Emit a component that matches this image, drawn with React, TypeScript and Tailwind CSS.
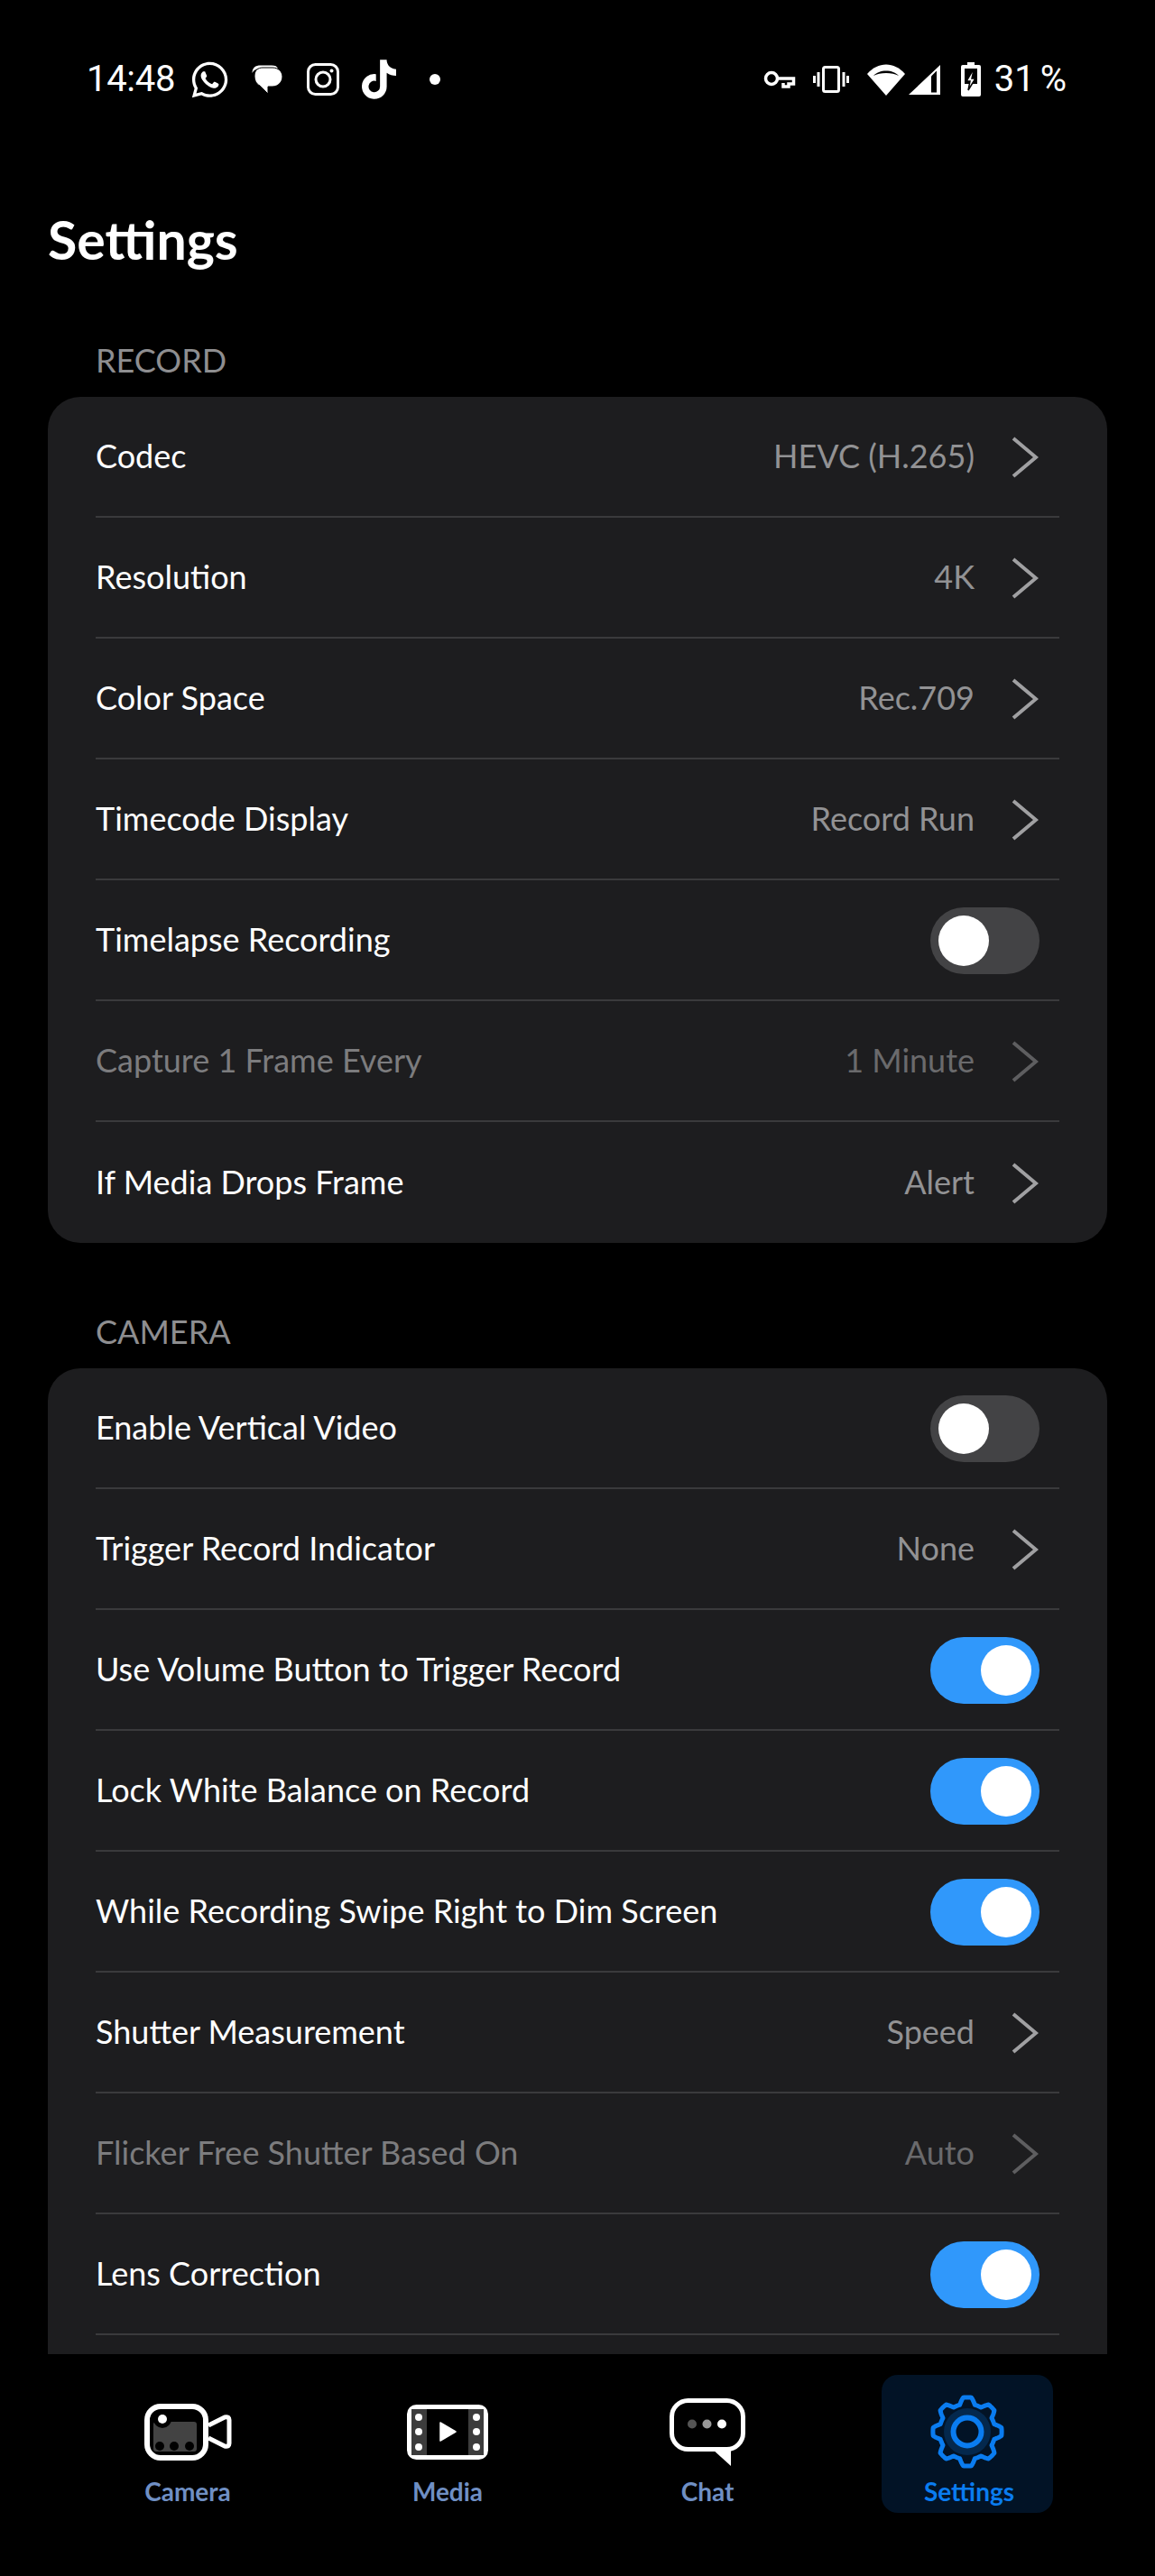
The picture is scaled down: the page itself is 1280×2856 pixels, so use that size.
import type { ReactNode } from "react";
import { FaTiktok, FaWhatsapp } from "react-icons/fa";

type Row =
  | { label: string; value: string; disabled?: boolean }
  | { label: string; on: boolean };

const recordRows: Row[] = [
  { label: "Codec", value: "HEVC (H.265)" },
  { label: "Resolution", value: "4K" },
  { label: "Color Space", value: "Rec.709" },
  { label: "Timecode Display", value: "Record Run" },
  { label: "Timelapse Recording", on: false },
  { label: "Capture 1 Frame Every", value: "1 Minute", disabled: true },
  { label: "If Media Drops Frame", value: "Alert" },
];

const cameraRows: Row[] = [
  { label: "Enable Vertical Video", on: false },
  { label: "Trigger Record Indicator", value: "None" },
  { label: "Use Volume Button to Trigger Record", on: true },
  { label: "Lock White Balance on Record", on: true },
  { label: "While Recording Swipe Right to Dim Screen", on: true },
  { label: "Shutter Measurement", value: "Speed" },
  { label: "Flicker Free Shutter Based On", value: "Auto", disabled: true },
  { label: "Lens Correction", on: true },
];

// toothed outline for the settings gear, 8 teeth with flattened tops
function gearPath() {
  const pts: string[] = [];
  for (let i = 0; i < 320; i++) {
    const t = (i / 320) * Math.PI * 2;
    const wave = Math.max(-1, Math.min(1, Math.cos(t * 8) * 1.7));
    const r = 34.5 + 3.6 * wave;
    const x = 41 + r * Math.sin(t);
    const y = 41 - r * Math.cos(t);
    pts.push(`${x.toFixed(2)} ${y.toFixed(2)}`);
  }
  return `M${pts.join("L")}Z`;
}

function Toggle({ on }: { on: boolean }) {
  return (
    <div
      className={`-mr-px mt-[2px] flex h-[74px] w-[121px] items-center rounded-full px-[9px] ${
        on ? "justify-end bg-[#3098fb]" : "justify-start bg-[#434345]"
      }`}
    >
      <div className="h-[56px] w-[56px] rounded-full bg-white" />
    </div>
  );
}

function Chevron({ disabled }: { disabled?: boolean }) {
  return (
    <svg width="30" height="46" viewBox="0 0 30 46" fill="none" className="ml-[41px] mt-[2px]">
      <path
        d="M2 2 L27 23 L2 44"
        stroke={disabled ? "#5e5e60" : "#a0a0a2"}
        strokeWidth="4"
      />
    </svg>
  );
}

function SettingsRow({ row, last }: { row: Row; last: boolean }) {
  const disabled = "disabled" in row && row.disabled;
  return (
    <div
      className={`flex h-[134px] items-center justify-between pr-[23px] ${
        last ? "" : "border-b-2 border-[#3a3a3c]"
      }`}
    >
      <span className={`pb-[3px] text-[36px] ${disabled ? "text-[#7c7c7e]" : "text-white"}`}>
        {row.label}
      </span>
      {"on" in row ? (
        <Toggle on={row.on} />
      ) : (
        <div className="flex items-center">
          <span className={`pb-[3px] text-[36px] ${disabled ? "text-[#6a6a6c]" : "text-[#929294]"}`}>
            {row.value}
          </span>
          <Chevron disabled={disabled} />
        </div>
      )}
    </div>
  );
}

function Section({
  title,
  rows,
  className,
  scrolled,
}: {
  title: string;
  rows: Row[];
  className?: string;
  scrolled?: boolean;
}) {
  return (
    <section className={className}>
      <h2 className="ml-[106px] mb-[14px] flex h-[54px] items-center text-[36px] text-[#8e8e90]">{title}</h2>
      <div className={`mx-[53px] rounded-[36px] bg-[#1d1d1f] px-[53px] ${scrolled ? "pb-[80px]" : ""}`}>
        {rows.map((row, i) => (
          <SettingsRow key={row.label} row={row} last={!scrolled && i === rows.length - 1} />
        ))}
      </div>
    </section>
  );
}

function StatusBar() {
  return (
    <div
      className="flex h-[176px] items-center justify-between pl-[96px] pr-[98px] text-[40px] leading-none text-white"
      style={{ fontFamily: "Roboto, sans-serif" }}
    >
      <div className="flex items-center">
        <span className="tracking-[-0.3px]">14:48</span>
        <FaWhatsapp className="ml-[16px] h-[45px] w-[45px]" />
        <svg width="34" height="32" viewBox="0 0 34 32" className="ml-[24px]" fill="white">
          <path d="M0.5 9C0.5 3 4 0.5 10 0.5H22C26 0.5 28 1.5 29 4H10C5 4 2 6 0.5 9Z" />
          <path d="M3 12C3 6 7 3 12 3H23C29 3 34 7 34 13C34 19 29 24 23 24H18V32L9 23C5 21 3 17 3 12Z" stroke="black" strokeWidth="1" />
        </svg>
        <svg width="36" height="36" viewBox="0 0 36 36" className="ml-[27px]" fill="none" stroke="white" strokeWidth="3">
          <rect x="1.5" y="1.5" width="33" height="33" rx="8" />
          <circle cx="18" cy="18" r="8" />
          <circle cx="27.5" cy="8.5" r="2" fill="white" stroke="none" />
        </svg>
        <FaTiktok className="ml-[25px] h-[44px] w-[38px]" />
        <div className="ml-[37px] h-[12px] w-[12px] rounded-full bg-white" />
      </div>
      <div className="flex items-center">
        <svg width="36" height="22" viewBox="0 0 36 22" fill="none" stroke="white" strokeWidth="3.5">
          <circle cx="9" cy="10" r="6.5" />
          <path d="M15 10H33.5V16H28V19H22V15" />
        </svg>
        <svg width="40" height="30" viewBox="0 0 40 30" className="ml-[19px]" fill="none" stroke="white" strokeWidth="3">
          <rect x="11.5" y="1.5" width="17" height="27" rx="2" />
          <path d="M6 7V23M1.5 11V19M34 7V23M38.5 11V19" />
        </svg>
        <svg width="42" height="35" viewBox="0 0 42 35" className="ml-[20px]">
          <path d="M0 11C12 -3 30 -3 42 11L21 35Z" fill="white" />
          <path d="M7 13C13 5.5 29 5.5 35 13C28 9 14 9 7 13Z" fill="black" />
        </svg>
        <svg width="35" height="33" viewBox="0 0 35 33" className="ml-[4px]">
          <path d="M0 33L35 0V33Z" fill="white" />
          <path d="M25 12.5L31 6.5V30.5H25Z" fill="black" />
        </svg>
        <svg width="22" height="38" viewBox="0 0 22 38" className="ml-[23px]">
          <path d="M7 0H15V3H20Q22 3 22 5V36Q22 38 20 38H2Q0 38 0 36V5Q0 3 2 3H7Z" fill="white" />
          <path d="M4 7H18V34H4Z" fill="black" />
          <path d="M4 24H18V34H4Z" fill="white" />
          <path d="M13 9L6 21H10L8 31L16 18H12L14 9Z" fill="white" stroke="black" strokeWidth="1.5" />
        </svg>
        <span className="ml-[15px] [word-spacing:-4px]">31 %</span>
      </div>
    </div>
  );
}

function CameraIcon() {
  return (
    <svg width="97" height="63" viewBox="0 0 97 63">
      <rect x="3" y="3" width="65" height="57" rx="15" fill="black" stroke="white" strokeWidth="6" />
      <rect x="10" y="20" width="48" height="33" rx="3" fill="#434343" />
      <circle cx="20" cy="17" r="10" fill="black" />
      <circle cx="20" cy="17" r="5" fill="white" />
      <circle cx="17" cy="47" r="5" fill="black" />
      <circle cx="33" cy="47" r="5" fill="black" />
      <circle cx="50" cy="47" r="5" fill="black" />
      <path d="M71 24L89 15Q94 14 94 18V44Q94 48 89 47L71 38" fill="none" stroke="white" strokeWidth="5" strokeLinejoin="round" />
    </svg>
  );
}

function MediaIcon() {
  return (
    <svg width="90" height="61" viewBox="0 0 90 61">
      <rect x="2.5" y="2.5" width="85" height="56" rx="8" fill="black" stroke="white" strokeWidth="5" />
      <rect x="5" y="5" width="17" height="51" fill="#3c3c3c" />
      <rect x="68" y="5" width="17" height="51" fill="#3c3c3c" />
      <circle cx="13" cy="14" r="4" fill="white" />
      <circle cx="13" cy="30" r="4" fill="white" />
      <circle cx="13" cy="47" r="4" fill="white" />
      <circle cx="77" cy="14" r="4" fill="white" />
      <circle cx="77" cy="30" r="4" fill="white" />
      <circle cx="77" cy="47" r="4" fill="white" />
      <path d="M37 20L54 30L37 40Z" fill="white" stroke="white" strokeWidth="1.5" strokeLinejoin="round" />
    </svg>
  );
}

function ChatIcon() {
  return (
    <svg width="84" height="75" viewBox="0 0 84 75">
      <rect x="2.5" y="2.5" width="79" height="54" rx="18" fill="black" stroke="white" strokeWidth="5" />
      <path d="M47 56H68V75Z" fill="white" />
      <circle cx="25" cy="28.5" r="5" fill="#555" />
      <circle cx="41.5" cy="28.5" r="5" fill="#999" />
      <circle cx="58" cy="28.5" r="5" fill="white" />
    </svg>
  );
}

function GearIcon() {
  return (
    <svg width="82" height="82" viewBox="0 0 82 82">
      <path d={gearPath()} fill="#021326" stroke="#0a7cf0" strokeWidth="5" strokeLinejoin="round" />
      <circle cx="41" cy="41" r="26" fill="#04284d" />
      <circle cx="41" cy="41" r="15.5" fill="#021326" stroke="#0a7cf0" strokeWidth="6" />
    </svg>
  );
}

function NavTab({ label, active, children }: { label: string; active?: boolean; children: ReactNode }) {
  return (
    <div className={`flex h-[153px] w-[190px] flex-col items-center justify-self-center rounded-[18px] ${active ? "bg-[#021326]" : ""}`}>
      <div className="mt-[22px] flex h-[82px] items-center justify-center">{children}</div>
      <span className={`mt-[8px] text-[28px] font-bold leading-[34px] ${active ? "ml-[4px] text-[#0a7cf0]" : "text-[#6f8fc4]"}`}>
        {label}
      </span>
    </div>
  );
}

export default function App() {
  return (
    <div
      className="flex h-[2856px] w-[1280px] flex-col overflow-hidden bg-black"
      style={{ fontFamily: "Lato, sans-serif" }}
    >
      <StatusBar />
      <div className="min-h-0 flex-1 overflow-hidden">
        <h1 className="ml-[53px] mt-[55px] text-[59px] font-bold leading-[70px] text-white">Settings</h1>
        <Section title="RECORD" rows={recordRows} className="mt-[71px]" />
        <Section title="CAMERA" rows={cameraRows} className="mt-[71px]" scrolled />
      </div>
      <nav className="grid h-[246px] shrink-0 grid-cols-4 px-[64px] pt-[23px]">
        <NavTab label="Camera"><CameraIcon /></NavTab>
        <NavTab label="Media"><MediaIcon /></NavTab>
        <NavTab label="Chat"><ChatIcon /></NavTab>
        <NavTab label="Settings" active><GearIcon /></NavTab>
      </nav>
    </div>
  );
}
